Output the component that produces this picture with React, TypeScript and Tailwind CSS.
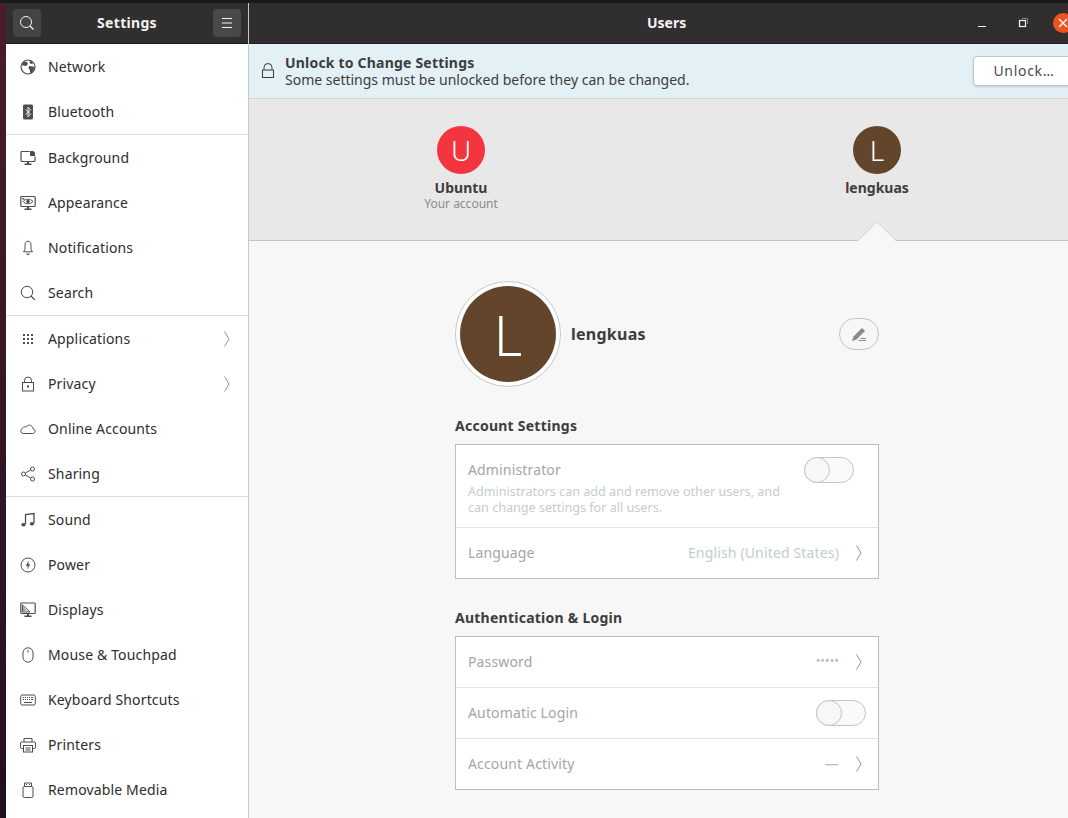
import type { ReactNode } from 'react'

const font = { fontFamily: '"Noto Sans", "DejaVu Sans", sans-serif' }

function Ico({ children }: { children: ReactNode }) {
  return (
    <svg viewBox="0 0 16 16" className="h-4 w-4 shrink-0 text-[#4d4d4d]" fill="none" stroke="currentColor" strokeWidth="1">
      {children}
    </svg>
  )
}

const icons: Record<string, ReactNode> = {
  network: (
    <>
      <circle cx="8" cy="8" r="7" strokeWidth="1.2" />
      <path d="M4 2.500 7 3 8 5 6 7 3 6.500 1.500 6ZM9 7l4 .5 1.500 1L13 12l-2 2.500-1-1V11L8.500 9.500ZM10 1.500l2 1 1 2-2.500 .5L9.500 3Z" fill="currentColor" stroke="none" />
    </>
  ),
  bluetooth: (
    <>
      <rect x="3" y="0.500" width="10" height="15" rx="1.500" fill="currentColor" stroke="none" />
      <path d="M5.500 5.500 10.500 10 8 12.800V3.200L10.500 6 5.500 10.500" stroke="#fff" strokeWidth="0.9" />
    </>
  ),
  background: (
    <>
      <path d="M9.500 1.500H2a1 1 0 0 0-1 1v8a1 1 0 0 0 1 1h12a1 1 0 0 0 1-1V6.500" strokeWidth="1.2" />
      <path d="M10 1h2.500a2.500 2.500 0 0 1 2.500 2.500V6h-5Z" fill="currentColor" stroke="none" />
      <path d="M7 12h2v1.500H7ZM4.500 13.500h7V15h-7Z" fill="currentColor" stroke="none" />
    </>
  ),
  appearance: (
    <>
      <rect x="0.800" y="1.500" width="14.400" height="10" rx="1" strokeWidth="1.200" />
      <path d="M3 6.500C5 3.500 10.500 3.500 13 6.500 10.500 9.500 5 9.500 3 6.500Z" />
      <circle cx="8" cy="6.500" r="1.700" fill="currentColor" stroke="none" />
      <path d="M2.300 3h2v1.500h-2Z" fill="currentColor" stroke="none" />
      <path d="M7 12h2v1.500H7ZM4.500 13.500h7V15h-7Z" fill="currentColor" stroke="none" />
    </>
  ),
  bell: (
    <>
      <path d="M8 1.200C5.600 1.500 5 3 5 5.500V9.500L3.500 11.800H12.500L11 9.500V5.500C11 3 10.400 1.500 8 1.200Z" />
      <path d="M6.500 13.500h3v1.300h-3Z" fill="currentColor" stroke="none" />
    </>
  ),
  search: (
    <>
      <circle cx="7" cy="7" r="5.700" />
      <path d="m11 11 3.800 3.800" strokeWidth="1.200" />
    </>
  ),
  apps: (
    <g fill="currentColor" stroke="none">
      <rect x="3" y="3" width="2" height="2" />
      <rect x="7" y="3" width="2" height="2" />
      <rect x="11" y="3" width="2" height="2" />
      <rect x="3" y="7" width="2" height="2" />
      <rect x="7" y="7" width="2" height="2" />
      <rect x="11" y="7" width="2" height="2" />
      <rect x="3" y="11" width="2" height="2" />
      <rect x="7" y="11" width="2" height="2" />
      <rect x="11" y="11" width="2" height="2" />
    </g>
  ),
  lock: (
    <>
      <path d="M4.500 6.500V4.500a3.500 3.500 0 0 1 7 0v2" />
      <rect x="2.500" y="6.500" width="11" height="8.500" />
      <rect x="7" y="9.500" width="2" height="2" fill="currentColor" stroke="none" />
    </>
  ),
  cloud: (
    <path d="M4 12.500H12.500C15.500 12.500 16 8.500 13 7.800 12.800 4.500 8.500 2.500 6.500 5.800 3 5 1 9 .8 10 .5 11.500 2.300 12.500 4 12.500Z" />
  ),
  share: (
    <>
      <circle cx="3.500" cy="8" r="2" />
      <circle cx="12.500" cy="3" r="2" />
      <circle cx="12.500" cy="13" r="2" />
      <path d="M5.300 7 10.700 4M5.300 9l5.400 3" />
    </>
  ),
  sound: (
    <>
      <path d="M5.500 12V2.500L14 1.500V11" strokeWidth="1.300" />
      <ellipse cx="3.500" cy="12.800" rx="2.200" ry="1.700" fill="currentColor" stroke="none" />
      <ellipse cx="12" cy="11.800" rx="2.200" ry="1.700" fill="currentColor" stroke="none" />
    </>
  ),
  power: (
    <>
      <circle cx="8" cy="8" r="7" />
      <path d="M8.800 3.500 5.800 8.800H7.700L7.200 12.500 10.200 7.200H8.300Z" fill="currentColor" stroke="none" />
    </>
  ),
  displays: (
    <>
      <rect x="0.800" y="1" width="14.400" height="10.500" rx="1" strokeWidth="1.200" />
      <path d="M2.500 3 10 10H2.500Z" />
      <path d="M3 4.500 7 9H3Z" fill="currentColor" stroke="none" opacity="0.500" />
      <path d="M7 12h2v1.500H7ZM4.500 13.500h7V15h-7Z" fill="currentColor" stroke="none" />
    </>
  ),
  mouse: (
    <>
      <rect x="3" y="0.800" width="10" height="14.400" rx="5" />
      <path d="M8 3v2.500" />
    </>
  ),
  keyboard: (
    <>
      <rect x="0.700" y="3" width="14.600" height="10" rx="1.500" />
      <path d="M3 5.500h1M5 5.500h1M7 5.500h1M9 5.500h1M11 5.500h2M3 7.500h1M5 7.500h1M7 7.500h1M9 7.500h1M11 7.500h2M4 10.500h8" strokeWidth="1.100" />
    </>
  ),
  printer: (
    <>
      <path d="M4 5V1.500h8V5" />
      <path d="M3.500 11.500H1.500a1 1 0 0 1-1-1V6a1 1 0 0 1 1-1h13a1 1 0 0 1 1 1v4.500a1 1 0 0 1-1 1h-2" />
      <rect x="3.500" y="8.500" width="9" height="6.500" />
      <path d="M5.500 11h5M5.500 13h5" />
    </>
  ),
  usb: (
    <>
      <rect x="3" y="4.500" width="10" height="11" rx="1.500" />
      <path d="M4.500 1h7v3.500" />
      <path d="M4.500 1v3.500" />
      <path d="M6 2.500h1M9 2.500h1" />
    </>
  ),
}

const groups = [
  [
    { name: 'Network', icon: 'network' },
    { name: 'Bluetooth', icon: 'bluetooth' },
  ],
  [
    { name: 'Background', icon: 'background' },
    { name: 'Appearance', icon: 'appearance' },
    { name: 'Notifications', icon: 'bell' },
    { name: 'Search', icon: 'search' },
  ],
  [
    { name: 'Applications', icon: 'apps', more: true },
    { name: 'Privacy', icon: 'lock', more: true },
    { name: 'Online Accounts', icon: 'cloud' },
    { name: 'Sharing', icon: 'share' },
  ],
  [
    { name: 'Sound', icon: 'sound' },
    { name: 'Power', icon: 'power' },
    { name: 'Displays', icon: 'displays' },
    { name: 'Mouse & Touchpad', icon: 'mouse' },
    { name: 'Keyboard Shortcuts', icon: 'keyboard' },
    { name: 'Printers', icon: 'printer' },
    { name: 'Removable Media', icon: 'usb' },
  ],
]

function Chevron({ className }: { className: string }) {
  return (
    <svg viewBox="0 0 8 16" className={className} fill="none" stroke="currentColor" strokeWidth="0.8">
      <path d="M1.500 0.500 6 8 1.500 15.500" />
    </svg>
  )
}

function Toggle() {
  return (
    <div className="h-[26px] w-[50px] rounded-full border border-[#c4c4c4] bg-[#fafafa]">
      <div className="-ml-px -mt-px h-[26px] w-[26px] rounded-full border border-[#c4c4c4] bg-[#f7f7f7]" />
    </div>
  )
}

function Row({ label, children }: { label: string; children: ReactNode }) {
  return (
    <div className="flex h-[50px] items-center justify-between pl-3 pr-[15px] text-[14px] tracking-[0.15px] text-[#a3a6a6]">
      <span className="pb-[2px]">{label}</span>
      {children}
    </div>
  )
}

export default function App() {
  return (
    <div style={font} className="flex h-[818px] w-[1068px] flex-col overflow-hidden bg-[#1c1a1a]">
      <div className="h-[3px] shrink-0 bg-[#1b1a1a]" />
      <div className="flex min-h-0 flex-1">
        <div className="w-[6px] shrink-0 bg-gradient-to-b from-[#4a1c2c] to-[#22101f]" />
        <div className="flex w-[243px] shrink-0 flex-col border-r border-[#c9c9c9] bg-white">
          <div className="flex h-[41px] shrink-0 items-center justify-between border-b border-[#1f1e1e] bg-[#302e2e] px-[7px] text-[#f3f3f3]">
            <button className="flex h-7 w-7 items-center justify-center rounded bg-[#454443]">
              <svg viewBox="0 0 16 16" className="h-4 w-4" fill="none" stroke="currentColor">
                <circle cx="7" cy="7" r="5.500" />
                <path d="m11 11 3.500 3.500" strokeWidth="1.300" />
              </svg>
            </button>
            <span className="pb-[2px] text-[14px] font-bold tracking-[0.3px]">Settings</span>
            <button className="flex h-7 w-7 items-center justify-center rounded bg-[#4a4948]">
              <svg viewBox="0 0 16 16" className="h-4 w-4" stroke="currentColor">
                <path d="M3 3.500h10M3 8h10M3 12.500h10" />
              </svg>
            </button>
          </div>
          {groups.map((group, i) => (
            <div key={i} className={i > 0 ? 'border-t border-[#e0e0e0]' : ''}>
              {group.map((item) => (
                <div key={item.name} className="flex h-[45px] items-center gap-[12px] pl-[14px] pr-[17px] text-[14px] tracking-[0.15px] text-[#2d2d2d]">
                  <Ico>{icons[item.icon]}</Ico>
                  <span className="flex-1">{item.name}</span>
                  {item.more && <Chevron className="h-4 w-2 text-[#777]" />}
                </div>
              ))}
            </div>
          ))}
        </div>

        <div className="flex min-w-0 flex-1 flex-col bg-[#f7f7f7]">
          <div className="flex h-[41px] shrink-0 items-center border-b border-[#1f1e1e] bg-[#302e2e] text-[#f3f3f3]">
            <span className="ml-[398px] pb-[2px] text-[14px] font-bold">Users</span>
            <div className="ml-auto flex items-center">
              <svg viewBox="0 0 12 12" className="-mt-[2px] h-3 w-3" stroke="currentColor"><path d="M2 10.500h8" /></svg>
              <svg viewBox="0 0 12 12" className="ml-[29px] h-3 w-3" fill="none" stroke="currentColor">
                <rect x="2.500" y="3.500" width="6" height="6" strokeWidth="1.200" />
                <path d="M5 1.500h5.500V7" stroke="#999" strokeWidth="0.800" />
              </svg>
              <div className="-mr-[5px] ml-[24px] flex h-5 w-5 items-center justify-center rounded-full bg-[#e9541f]">
                <svg viewBox="0 0 12 12" className="h-3 w-3" stroke="#fff" strokeWidth="1.300"><path d="m2 2 8 8M10 2l-8 8" /></svg>
              </div>
            </div>
          </div>

          <div className="flex h-[55px] shrink-0 items-center border-b border-[#d2d2d2] bg-[#e3f0f6] pl-[12px] text-[#3d3d3d]">
            <svg viewBox="0 0 14 16" className="h-4 w-[14px] shrink-0" fill="none" stroke="#3d3d3d">
              <path d="M3 7V4.500a4 4 0 0 1 8 0V7" />
              <rect x="1.500" y="7" width="11" height="7.500" />
            </svg>
            <div className="ml-[10px] leading-[17px]">
              <div className="text-[14px] font-bold tracking-[0.2px]">Unlock to Change Settings</div>
              <div className="text-[14px]">Some settings must be unlocked before they can be changed.</div>
            </div>
            <button className="-mr-[7px] mb-[1px] ml-auto h-[30px] w-[102px] rounded-l border border-[#c4c4c4] bg-white pb-[1px] text-[14px] tracking-[0.7px] text-[#4a4a4a] shadow-sm">
              Unlock…
            </button>
          </div>

          <div className="relative h-[142px] shrink-0 border-b border-[#c4c4c4] bg-[#e8e8e8]">
            <div className="flex justify-between pl-[162px] pr-[141px] pt-[27px]">
              <div className="flex w-[100px] flex-col items-center">
                <div className="flex h-12 w-12 items-center justify-center rounded-full bg-[#f2353f] text-[28px] font-light text-white">U</div>
                <div className="mt-[5px] text-[14px] font-bold leading-[18px] text-[#3d3d3d]">Ubuntu</div>
                <div className="text-[12px] leading-[14px] text-[#8c8c8c]">Your account</div>
              </div>
              <div className="flex w-[100px] flex-col items-center">
                <div className="flex h-12 w-12 items-center justify-center rounded-full bg-[#63452c] text-[28px] font-light text-white">L</div>
                <div className="mt-[5px] text-[14px] font-bold leading-[18px] text-[#3d3d3d]">lengkuas</div>
              </div>
            </div>
            <svg viewBox="0 0 38 20" className="absolute -bottom-px left-[609px] h-5 w-[38px]">
              <path d="M0 20 19 1 38 20Z" fill="#f7f7f7" />
              <path d="M0 19.500 19 .700 38 19.500" fill="none" stroke="#d4d4d4" />
            </svg>
          </div>

          <div className="flex flex-1 flex-col pl-[206px]">
            <div className="w-[424px]">
              <div className="mt-[40px] flex h-[106px] items-center">
                <div className="flex h-[106px] w-[106px] shrink-0 items-center justify-center rounded-full border border-[#c8c8c8] bg-white">
                  <div className="flex h-24 w-24 items-center justify-center rounded-full bg-[#63452c] text-[55px] font-light leading-none text-white">L</div>
                </div>
                <span className="ml-[10px] text-[16px] font-bold tracking-[0.25px] text-[#3d3d3d]">lengkuas</span>
                <button className="ml-auto flex h-[32px] w-[40px] items-center justify-center rounded-full border border-[#c4c4c4]">
                  <svg viewBox="0 0 16 16" className="h-4 w-4">
                    <path d="M1 15 2.500 10.500 11 2 14 5 5.500 13.500Z" fill="#8a8a8a" />
                    <path d="M9.500 12.500h5.500M7.500 14.500h7.500" stroke="#8a8a8a" />
                  </svg>
                </button>
              </div>

              <div className="mt-[29px] h-[20px] text-[14px] font-bold leading-[20px] tracking-[0.25px] text-[#3d3d3d]">Account Settings</div>
              <div className="mt-[8px] border border-[#bdbdbd] bg-white">
                <div className="flex h-[83px] justify-between border-b border-[#e3e3e3] pl-3 pr-6 pt-[14px]">
                  <div>
                    <div className="text-[14px] leading-[22px] tracking-[0.15px] text-[#a3a6a6]">Administrator</div>
                    <div className="mt-[3px] text-[12.6px] leading-4 text-[#c3cdcf]">
                      Administrators can add and remove other users, and
                      <br />
                      can change settings for all users.
                    </div>
                  </div>
                  <div className="-mt-[2px]"><Toggle /></div>
                </div>
                <Row label="Language">
                  <div className="flex items-center gap-4">
                    <span className="pb-[2px] text-[#c3cdcf]">English (United States)</span>
                    <Chevron className="h-4 w-2 text-[#777]" />
                  </div>
                </Row>
              </div>

              <div className="mt-[29px] h-[20px] text-[14px] font-bold leading-[20px] tracking-[0.25px] text-[#3d3d3d]">Authentication &amp; Login</div>
              <div className="mt-[8px] border border-[#bdbdbd] bg-white">
                <div className="border-b border-[#e3e3e3]">
                  <Row label="Password">
                    <div className="flex items-center gap-4">
                      <span className="pb-[2px] text-[12px] text-[#b5bcbe]">•••••</span>
                      <Chevron className="h-4 w-2 text-[#777]" />
                    </div>
                  </Row>
                </div>
                <div className="border-b border-[#e3e3e3]">
                  <div className="flex h-[50px] items-center justify-between pl-3 pr-3 text-[14px] tracking-[0.15px] text-[#a3a6a6]">
                    <span className="pb-[2px]">Automatic Login</span>
                    <Toggle />
                  </div>
                </div>
                <Row label="Account Activity">
                  <div className="flex items-center gap-4">
                    <span className="pb-[2px] text-[#b5bcbe]">—</span>
                    <Chevron className="h-4 w-2 text-[#777]" />
                  </div>
                </Row>
              </div>
            </div>
          </div>
        </div>
      </div>
    </div>
  )
}
